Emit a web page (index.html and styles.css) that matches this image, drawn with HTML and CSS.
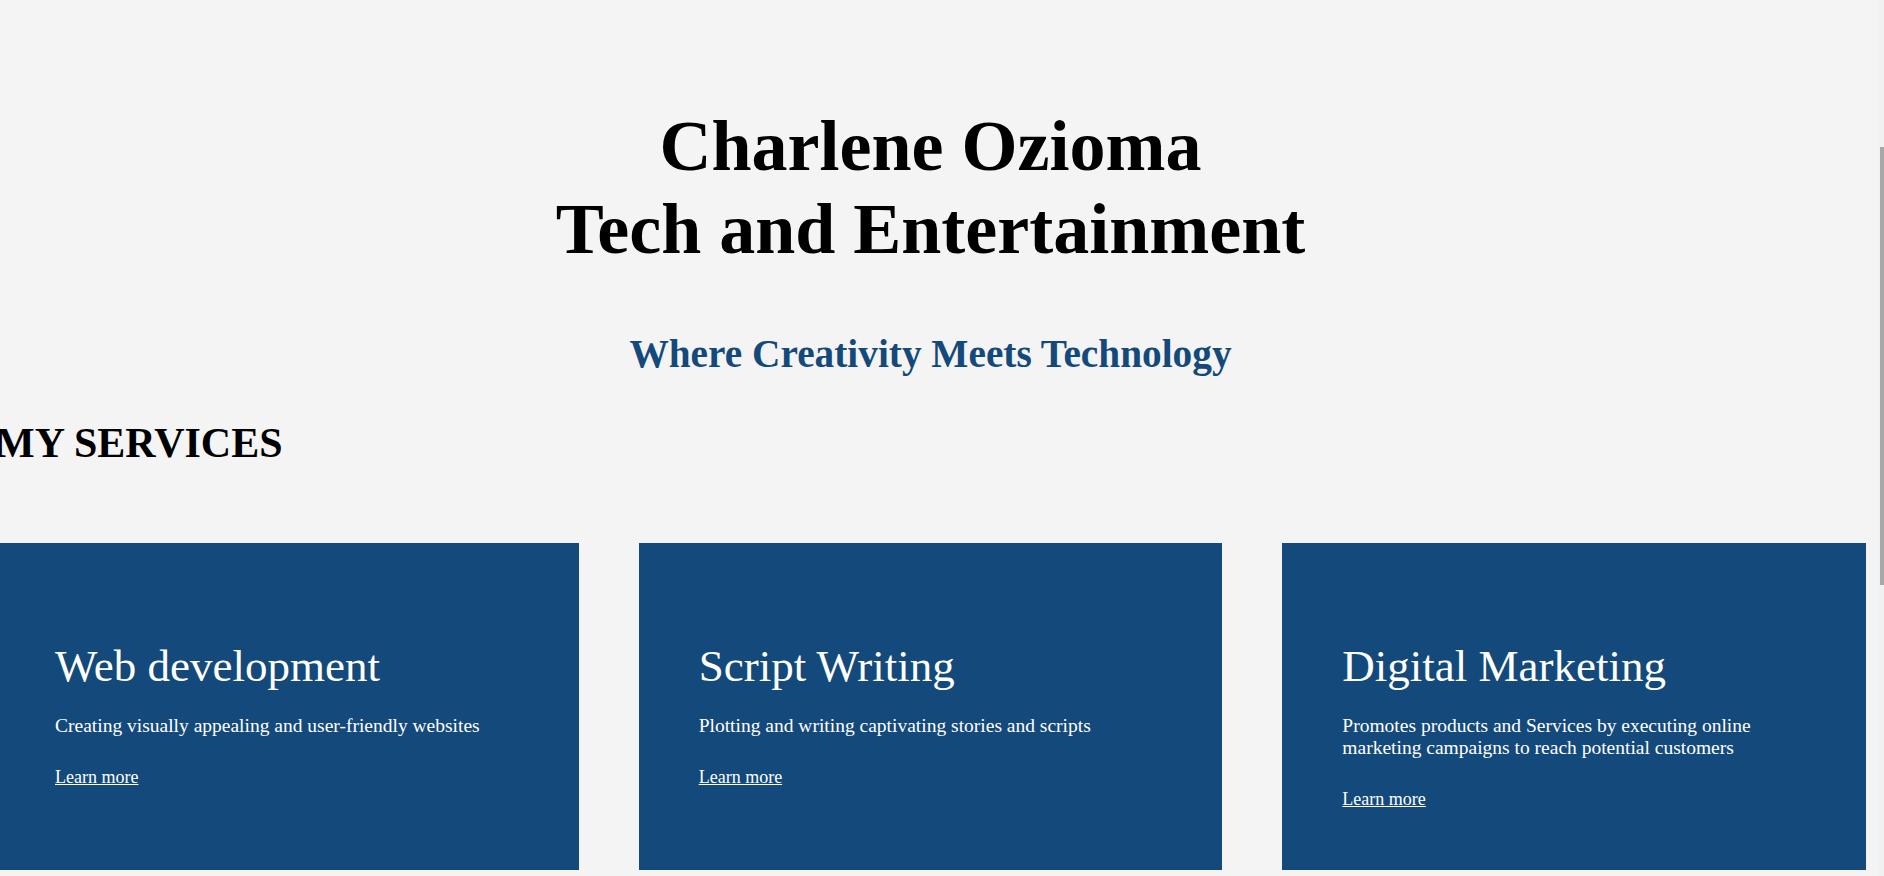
FILE: index.html
```html
<!DOCTYPE html>
<html lang="en">
<head>
<meta charset="utf-8">
<title>Charlene Ozioma — Tech and Entertainment</title>
<link rel="stylesheet" href="styles.css">
</head>
<body>
<div class="page">
  <header class="hero">
    <h1 class="hero-title">Charlene Ozioma<br>Tech and Entertainment</h1>
    <h2 class="hero-tagline">Where Creativity Meets Technology</h2>
  </header>
  <section class="services">
    <h2 class="services-title">MY SERVICES</h2>
    <div class="service-list">
      <article class="service-card">
        <h3 class="service-name">Web development</h3>
        <p class="service-desc">Creating visually appealing and user-friendly websites</p>
        <a class="service-link" href="#">Learn more</a>
      </article>
      <article class="service-card">
        <h3 class="service-name">Script Writing</h3>
        <p class="service-desc">Plotting and writing captivating stories and scripts</p>
        <a class="service-link" href="#">Learn more</a>
      </article>
      <article class="service-card">
        <h3 class="service-name">Digital Marketing</h3>
        <p class="service-desc">Promotes products and Services by executing online marketing campaigns to reach potential customers</p>
        <a class="service-link" href="#">Learn more</a>
      </article>
    </div>
  </section>
</div>
<div class="scrollbar"><div class="scrollbar-thumb"></div></div>
</body>
</html>
```

FILE: styles.css
```css
html, body {
  margin: 0;
  padding: 0;
  overflow: hidden;
}

body {
  background: #f4f4f4;
  font-family: "Liberation Serif", "Times New Roman", serif;
  font-size: 18px;
  color: #000;
}

.page {
  width: 1871px;
  margin-left: -5px;
}

.hero {
  padding-top: 105px;
  text-align: center;
}

.hero-title {
  margin: 0;
  font-size: 72px;
  font-weight: bold;
  line-height: normal;
}

.hero-tagline {
  margin: 60px 0 0;
  font-size: 39.3px;
  font-weight: bold;
  color: #14497b;
  line-height: normal;
}

.services {
  padding-top: 42px;
}

.services-title {
  margin: 0;
  font-size: 42px;
  font-weight: bold;
  line-height: normal;
}

.service-list {
  display: flex;
  gap: 60px;
  margin-top: 76px;
}

.service-card {
  flex: 1 1 0;
  background: #14497b;
  color: #fff;
  padding: 97px 60px 60px;
}

.service-name {
  margin: 0;
  font-size: 45px;
  font-weight: normal;
  line-height: normal;
}

.service-desc {
  margin: 23px 0 0;
  font-size: 19.5px;
  line-height: normal;
}

.service-link {
  display: inline-block;
  margin-top: 30px;
  color: #fff;
  text-decoration: underline;
  font-size: 18px;
  line-height: normal;
}

.scrollbar {
  position: fixed;
  top: 0;
  right: 0;
  width: 6px;
  height: 100%;
  background: #f1f1f1;
}

.scrollbar-thumb {
  margin-top: 147px;
  margin-left: 2px;
  width: 4px;
  height: 438px;
  background: #a8a8a8;
}
```
